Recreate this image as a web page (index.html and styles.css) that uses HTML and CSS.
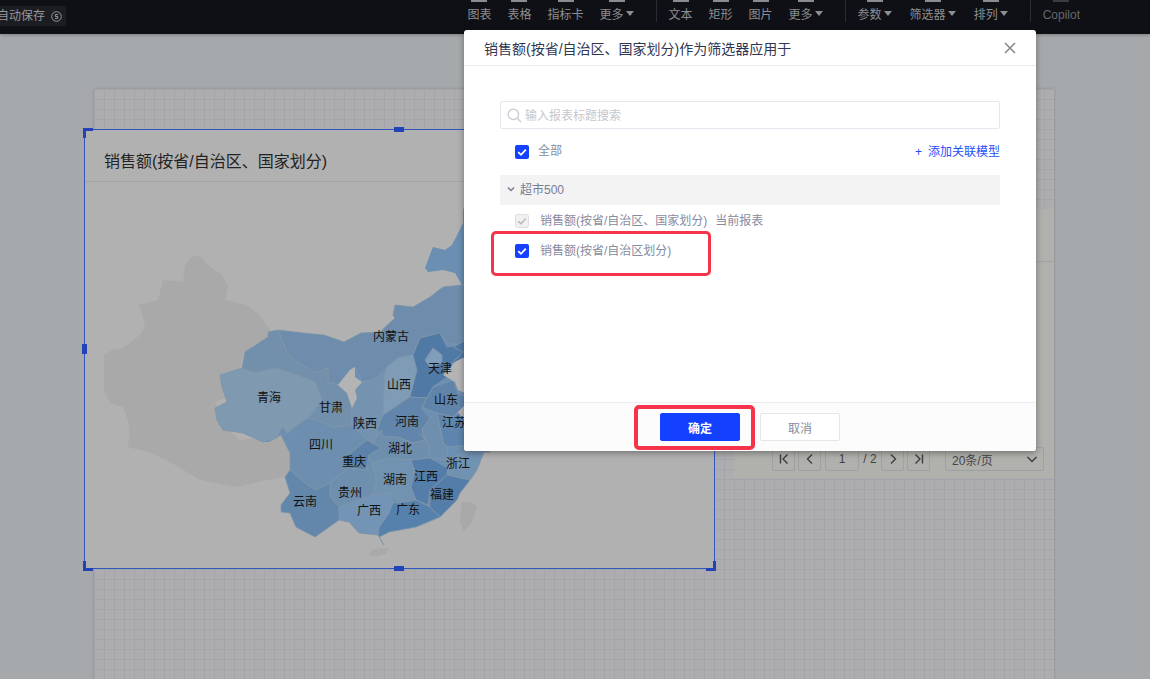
FILE: index.html
```html
<!DOCTYPE html>
<html lang="zh-CN">
<head>
<meta charset="utf-8">
<title>销售额作为筛选器</title>
<link rel="stylesheet" href="styles.css">
</head>
<body>
<div class="app">
  <header class="topbar">
    <div class="autosave">自动保存
      <svg class="save-icon" viewBox="0 0 11 11"><circle cx="5.5" cy="5.5" r="4.8"/><path d="M7.2 3.6H4.4v1.9h2.4v1.9H3.9"/></svg>
    </div>
    <nav class="tools">
      <div class="tool"><i class="stub"></i><span>图表</span></div>
      <div class="tool"><i class="stub"></i><span>表格</span></div>
      <div class="tool"><i class="stub"></i><span>指标卡</span></div>
      <div class="tool"><i class="stub"></i><span class="caret">更多</span></div>
      <i class="sep"></i>
      <div class="tool"><i class="stub"></i><span>文本</span></div>
      <div class="tool"><i class="stub"></i><span>矩形</span></div>
      <div class="tool"><i class="stub"></i><span>图片</span></div>
      <div class="tool"><i class="stub"></i><span class="caret">更多</span></div>
      <i class="sep"></i>
      <div class="tool"><i class="stub"></i><span class="caret">参数</span></div>
      <div class="tool tool-spaced"><i class="stub"></i><span class="caret">筛选器</span></div>
      <div class="tool tool-spaced"><i class="stub"></i><span class="caret">排列</span></div>
      <i class="sep"></i>
      <div class="tool copilot"><i class="stub"></i><span>Copilot</span></div>
    </nav>
  </header>

  <main class="workspace">
    <div class="canvas">
      <section class="widget map-widget">
        <h2 class="widget-title">销售额(按省/自治区、国家划分)</h2>
        <svg class="map" viewBox="85 182 629 386">
          <polygon class="land-grey" points="193,256 202,257 205,263 222,275 228,287 225,300 247,305 260,315 270,330 271,332 268,340 253,345 243,355 240,368 222,376 228,390 227,398 216,401 218,422 240,440 281,435 290,453 290,470 285,477 262,481 237,487 200,480 175,465 150,452 127,447 130,437 128,420 123,407 110,403 104,392 104,355 112,350 123,348 140,335 145,327 143,315 138,305 158,300 163,280 183,282 185,265"/>
          <polygon class="land-grey" points="462,502 470,502 477,506 472,522 464,532 460,522"/>
          <polygon class="land-grey" points="369,555 374,549 389,548 386,554 376,556"/>
          <polygon class="base" points="220,375 242,368 245,352 268,337 268,332 278,330 303,333 324,335 344,342 361,333 380,332 395,318 393,315 395,305 413,307 430,297 443,287 462,285 455,273 443,270 428,272 425,268 428,260 433,247 445,250 452,245 463,223 463,210 465,205 490,205 490,452 484,452 477,470 470,480 460,493 457,500 440,517 416,527 389,532 379,537 384,545 378,535 359,533 349,522 339,520 315,537 296,527 290,513 281,512 281,505 290,493 285,477 290,470 290,453 281,435 269,442 263,442 243,433 223,430 217,420 215,408 227,402 222,387"/>
          <polygon class="prov p-imng" points="278,330 303,333 324,335 344,342 361,333 380,332 395,318 393,315 395,305 413,307 430,297 443,287 462,285 470,287 470,335 460,345 447,343 440,333 420,338 413,355 398,358 387,367 373,380 362,382 355,367 350,370 338,385 328,382 328,368 315,373 297,362 287,353"/>
          <polygon class="prov p-gs" points="242,368 245,352 268,337 268,332 278,330 287,353 297,362 315,373 328,368 328,382 338,385 347,393 352,408 352,425 333,427 317,420 308,418 313,412 322,400 315,382 297,375 275,368 255,373"/>
          <polygon class="prov p-qh" points="220,375 242,368 255,373 275,368 297,375 315,382 322,400 313,412 308,418 297,425 288,433 282,427 277,438 263,442 243,433 223,430 217,420 215,408 227,402 222,387"/>
          <polygon class="prov p-sn" points="362,382 373,380 385,372 383,415 377,430 383,437 372,445 352,425 352,408 357,398 355,390"/>
          <polygon class="prov p-sx" points="387,367 398,358 413,355 417,370 410,397 383,415 385,372"/>
          <polygon class="prov p-he" points="413,355 420,338 440,333 447,347 460,345 463,352 450,365 453,373 433,387 427,398 410,397 417,370"/>
          <polygon class="prov p-ln" points="453,347 470,338 480,345 480,360 463,358 450,365 463,352"/>
          <polygon class="prov p-bj" points="425,360 433,348 442,355 442,363 430,367"/>
          <polygon class="prov p-sd" points="427,398 433,387 453,380 458,393 470,400 453,417 437,413 422,407"/>
          <polygon class="prov p-ha" points="383,415 410,397 427,398 422,407 423,410 430,418 422,430 425,440 413,443 397,437 383,437 377,430"/>
          <polygon class="prov p-js" points="437,413 453,417 470,405 480,430 470,445 448,447 443,443 440,427"/>
          <polygon class="prov p-ah" points="430,418 437,413 440,427 443,443 448,447 447,460 430,458 428,443 420,433 425,440 422,430"/>
          <polygon class="prov p-hb" points="381,430 383,437 397,437 413,443 425,440 428,443 430,458 411,460 389,458 372,463 369,455 381,448 367,440 372,445"/>
          <polygon class="prov p-sc" points="281,435 288,433 297,425 308,418 317,420 333,427 352,425 372,445 367,440 342,460 349,468 342,473 330,483 315,490 305,483 290,470 290,453"/>
          <polygon class="prov p-cq" points="367,440 381,448 369,455 366,470 349,468 342,460"/>
          <polygon class="prov p-hn" points="372,463 389,458 411,460 415,472 411,487 416,500 398,503 391,493 372,495 377,483"/>
          <polygon class="prov p-jx" points="411,460 430,458 448,468 447,475 430,490 428,505 416,500 411,487 415,472"/>
          <polygon class="prov p-zj" points="447,460 464,452 490,452 484,452 477,470 470,480 453,477 447,475 448,468"/>
          <polygon class="prov p-fj" points="447,475 470,480 460,493 457,500 440,517 430,507 430,490"/>
          <polygon class="prov p-gd" points="391,503 398,503 416,500 430,507 440,517 416,527 389,532 379,537 384,545 378,535 379,527 389,513"/>
          <polygon class="prov p-gx" points="339,507 369,495 372,495 391,493 393,503 389,513 379,527 378,535 359,533 349,522 339,520"/>
          <polygon class="prov p-gz" points="330,483 342,473 349,468 366,470 372,463 377,483 372,495 339,507 330,497"/>
          <polygon class="prov p-yn" points="285,477 290,470 305,483 315,490 330,483 330,497 339,507 339,520 315,537 296,527 290,513 281,512 281,505 290,493"/>
          <polygon class="hole" points="355,367 350,370 338,385 347,393 352,408 357,398 355,390 362,382 355,377"/>
          <polygon class="hole" points="463,358 455,362 443,375 455,382 458,390 470,395 480,360"/>
          <polygon class="hole" points="470,400 458,412 462,418 480,425 480,400"/>
          <text x="391" y="341">内蒙古</text><text x="269" y="402">青海</text><text x="331" y="412">甘肃</text>
          <text x="399" y="389">山西</text><text x="440" y="373">天津</text><text x="446" y="404">山东</text>
          <text x="365" y="428">陕西</text><text x="407" y="426">河南</text><text x="454" y="427">江苏</text>
          <text x="321" y="449">四川</text><text x="400" y="453">湖北</text><text x="354" y="466">重庆</text>
          <text x="458" y="468">浙江</text><text x="395" y="484">湖南</text><text x="426" y="481">江西</text>
          <text x="350" y="497">贵州</text><text x="442" y="499">福建</text><text x="305" y="506">云南</text>
          <text x="369" y="515">广西</text><text x="408" y="514">广东</text>
        </svg>
        <i class="handle h-tm"></i><i class="handle h-ml"></i><i class="handle h-bm"></i>
        <i class="corner c-tl"></i><i class="corner c-bl"></i><i class="corner c-br"></i>
      </section>

      <section class="widget table-widget">
        <div class="table-head"></div>
        <div class="pager">
          <span class="pg-btn"><svg viewBox="0 0 12 12"><path d="M2.5 1.5v9M9.5 1.5 5 6l4.5 4.5"/></svg></span>
          <span class="pg-btn"><svg viewBox="0 0 12 12"><path d="M8 1.5 3.5 6 8 10.5"/></svg></span>
          <span class="pg-input">1</span>
          <span class="pg-total">/ 2</span>
          <span class="pg-btn"><svg viewBox="0 0 12 12"><path d="M4 1.5 8.5 6 4 10.5"/></svg></span>
          <span class="pg-btn"><svg viewBox="0 0 12 12"><path d="M2.5 1.5 7 6l-4.5 4.5M9.5 1.5v9"/></svg></span>
          <span class="pg-select">20条/页<svg viewBox="0 0 12 12"><path d="M1.5 4 6 8.5 10.5 4"/></svg></span>
        </div>
      </section>
    </div>
  </main>

  <div class="dialog">
    <div class="dialog-head">
      <span>销售额(按省/自治区、国家划分)作为筛选器应用于</span>
      <svg class="close" viewBox="0 0 12 12"><path d="M1 1l10 10M11 1 1 11"/></svg>
    </div>
    <div class="dialog-body">
      <div class="search">
        <svg viewBox="0 0 16 16"><circle cx="6.8" cy="6.8" r="5.6"/><path d="m11 11 4 4"/></svg>
        <span>输入报表标题搜索</span>
      </div>
      <div class="row all-row">
        <svg class="cb" viewBox="0 0 14 14"><rect width="14" height="14" rx="2"/><path d="M3.2 7.2 6 9.8l4.8-5.2"/></svg>
        <span class="all-label">全部</span>
        <span class="add-link"><b>+</b>添加关联模型</span>
      </div>
      <div class="group">
        <svg viewBox="0 0 10 10"><path d="M1.2 3 5 6.8 8.8 3"/></svg>
        <span>超市500</span>
      </div>
      <div class="row item">
        <svg class="cb cb-off" viewBox="0 0 14 14"><rect x=".5" y=".5" width="13" height="13" rx="2"/><path d="M3.2 7.2 6 9.8l4.8-5.2"/></svg>
        <span>销售额(按省/自治区、国家划分)</span>
        <span class="current">当前报表</span>
      </div>
      <div class="row item">
        <svg class="cb" viewBox="0 0 14 14"><rect width="14" height="14" rx="2"/><path d="M3.2 7.2 6 9.8l4.8-5.2"/></svg>
        <span>销售额(按省/自治区划分)</span>
      </div>
    </div>
    <div class="dialog-foot">
      <button class="btn btn-primary">确定</button>
      <button class="btn">取消</button>
    </div>
    <i class="mark mark-row"></i>
    <i class="mark mark-btn"></i>
  </div>
</div>
</body>
</html>
```

FILE: styles.css
```css
* { box-sizing: border-box; }
html, body { margin: 0; height: 100%; overflow: hidden; }
body { font-family: "Liberation Sans", "Noto Sans CJK SC", sans-serif; font-size: 12px; }
i { display: block; font-style: normal; }

.app { position: relative; width: 1150px; height: 679px; overflow: hidden; display: flex; flex-direction: column; background: #a6a9ab; }

/* top bar */
.topbar { height: 34px; flex: none; display: flex; align-items: flex-start; background: #0f1016; color: #8d8e90; position: relative; z-index: 1; box-shadow: 0 1px 3px rgba(0,0,0,.25); }
.autosave { margin: 6px 0 0 -8px; padding-left: 5px; width: 74px; height: 20px; display: flex; align-items: center; gap: 6px; background: #1c1d23; border-radius: 2px; color: #96979a; line-height: 20px; white-space: nowrap; }
.save-icon { width: 11px; height: 11px; flex: none; fill: none; stroke: #96979a; stroke-width: 1; }
.tools { margin-left: auto; padding-right: 70px; display: flex; gap: 16px; }
.tool { display: flex; flex-direction: column; align-items: center; }
.tool span { margin-top: 5px; line-height: 17px; white-space: nowrap; }
.tool-spaced { margin-left: 2px; }
.stub { width: 16px; height: 2px; background: #8b8c8e; }
.caret { display: flex; align-items: center; gap: 2px; }
.caret::after { content: ""; width: 0; height: 0; margin-top: -4px; border-style: solid; border-width: 5px 4px 0; border-color: #8d8e90 transparent transparent; }
.sep { width: 1px; height: 22px; background: #2b2c31; margin: 0 -4px 0 6px; }
.copilot { color: #66676a; }
.copilot .stub { background: #3a3b3f; }

/* workspace */
.workspace { flex: 1; min-height: 0; }
.canvas {
  position: relative; width: 960px; height: 610px; margin: 55px 0 0 94px;
  background-color: #adadb0;
  background-image: linear-gradient(#a4a4aa 1px, transparent 1px), linear-gradient(90deg, #a4a4aa 1px, transparent 1px);
  background-size: 10px 10px;
  box-shadow: 0 0 3px rgba(0,0,0,.18);
}
.widget { position: absolute; background: #b1b1b1; }
.map-widget { left: -10px; top: 40px; width: 631px; height: 440px; border: 1px solid #3057c0; display: flex; flex-direction: column; z-index: 1; }
.widget-title { margin: 0; height: 52px; flex: none; padding: 13px 0 0 19px; border-bottom: 1px solid #a3a3a3; font-size: 16px; font-weight: 400; line-height: 38px; color: #232323; }
.map { display: block; flex: 1; min-height: 0; width: 100%; }
.map text { font-size: 12px; fill: #111; text-anchor: middle; }
.land-grey { fill: #a9a9a9; }
.base { fill: #6a8fb2; }
.prov { stroke: #7e97ad; stroke-width: .8; stroke-linejoin: round; filter: saturate(.85); }
.hole { fill: #b4b4b4; }
.p-imng { fill: #698eb2; }
.p-gs { fill: #6d91b1; }
.p-qh { fill: #7a9ab5; }
.p-sn { fill: #6f94b6; }
.p-sx { fill: #799dbb; }
.p-he { fill: #4a7aae; }
.p-ln { fill: #4a7aae; }
.p-bj { fill: #7a9fc2; }
.p-sd { fill: #5a85b2; }
.p-ha { fill: #5c87b2; }
.p-js { fill: #5786b5; }
.p-ah { fill: #6a90b5; }
.p-hb { fill: #698fb5; }
.p-sc { fill: #688fb5; }
.p-cq { fill: #5783b2; }
.p-hn { fill: #6d93b8; }
.p-jx { fill: #4e7eb2; }
.p-zj { fill: #6d93b8; }
.p-fj { fill: #4e7eb2; }
.p-gd { fill: #4f82b5; }
.p-gx { fill: #6e95ba; }
.p-gz { fill: #6a90b5; }
.p-yn { fill: #5d88b2; }

.handle { position: absolute; width: 10px; height: 5px; background: #2242b8; }
.h-tm { left: 309px; top: -3px; }
.h-bm { left: 309px; bottom: -3px; }
.h-ml { left: -3px; top: 214px; width: 5px; height: 10px; }
.corner { position: absolute; width: 10px; height: 10px; border: 0 solid #2242b8; }
.c-tl { left: -2px; top: -2px; border-width: 3px 0 0 3px; }
.c-bl { left: -2px; bottom: -3px; border-width: 0 0 3px 3px; }
.c-br { right: -2px; bottom: -3px; border-width: 0 3px 3px 0; }

.table-widget { left: 640px; top: 120px; width: 320px; height: 269px; display: flex; flex-direction: column; justify-content: space-between; background: #b0b0ad; }
.table-head { height: 53px; border-bottom: 1px solid #a2a2a2; }
.pager { display: flex; align-items: center; height: 24px; margin: 0 0 7px 38px; color: #444; }
.pager svg { width: 12px; height: 12px; fill: none; stroke: #3d3d3d; stroke-width: 1.4; }
.pg-btn { width: 23px; height: 24px; margin-right: 3px; display: flex; align-items: center; justify-content: center; border: 1px solid #a0a0a0; border-radius: 2px; }
.pg-input { width: 34px; height: 24px; margin-left: 1px; display: flex; align-items: center; justify-content: center; border: 1px solid #a0a0a0; border-radius: 2px; }
.pg-total { width: 22px; text-align: center; }
.pg-select { width: 99px; height: 24px; margin-left: 12px; padding: 0 5px 0 6px; display: flex; align-items: center; justify-content: space-between; border: 1px solid #a0a0a0; border-radius: 2px; }

/* dialog */
.dialog { position: absolute; left: 464px; top: 30px; width: 572px; height: 421px; display: flex; flex-direction: column; background: #fff; border-radius: 3px; box-shadow: 0 2px 6px rgba(0,0,0,.35); z-index: 5; }
.dialog-head { height: 36px; flex: none; padding: 0 20px; display: flex; align-items: center; justify-content: space-between; border-bottom: 1px solid #ebebee; font-size: 14px; color: #2f3654; }
.close { width: 12px; height: 12px; fill: none; stroke: #85858b; stroke-width: 1.5; }
.dialog-body { flex: 1; min-height: 0; padding: 35px 36px 0; color: #868b9f; }
.search { height: 28px; padding-left: 6px; display: flex; align-items: center; gap: 3px; border: 1px solid #e7e7f0; border-radius: 2px; color: #c6c6cc; }
.search span { margin-top: -2px; }
.search svg { width: 15px; height: 15px; fill: none; stroke: #c9c9d0; stroke-width: 1.4; }
.row { height: 30px; padding-left: 15px; display: flex; align-items: center; }
.all-row { margin-top: 8px; }
.all-label { margin-left: 9px; line-height: 14px; margin-top: -2px; }
.add-link { margin-left: auto; margin-top: -3px; color: #1f4fff; }
.add-link b { font-weight: 400; margin-right: 6px; }
.cb { width: 14px; height: 14px; flex: none; }
.cb rect { fill: #1440ff; }
.cb path { fill: none; stroke: #fff; stroke-width: 1.8; }
.cb-off rect { fill: #f0f0f1; stroke: #dedee2; }
.cb-off path { stroke: #b4b4ba; stroke-width: 1.4; }
.group { margin-top: 8px; height: 30px; padding-left: 7px; display: flex; align-items: center; gap: 5px; background: #f3f3f4; color: #777c92; }
.group span { margin-top: -4px; }
.group svg { width: 8px; height: 8px; margin-top: -3px; fill: none; stroke: #777c92; stroke-width: 1.8; }
.item { gap: 11px; }
.group + .item { margin-top: 1px; }
.item span { margin-top: -4px; }
.item .current { margin-left: -3px; }
.dialog-foot { height: 49px; flex: none; display: flex; align-items: center; justify-content: center; gap: 20px; background: #fcfcfc; border-top: 1px solid #ededef; border-radius: 0 0 3px 3px; }
.btn { width: 80px; height: 28px; padding: 0; border: 1px solid #e6e6e8; border-radius: 2px; background: #fff; font: inherit; color: #868b9f; }
.btn-primary { border-color: #1440ff; background: #1440ff; color: #fff; font-weight: 700; }
.mark { position: absolute; border: 3.5px solid #f5334a; border-radius: 5px; }
.mark-row { left: 27px; top: 201px; width: 220px; height: 45px; }
.mark-btn { left: 170px; top: 375px; width: 121px; height: 45px; border-width: 4px; }
```
